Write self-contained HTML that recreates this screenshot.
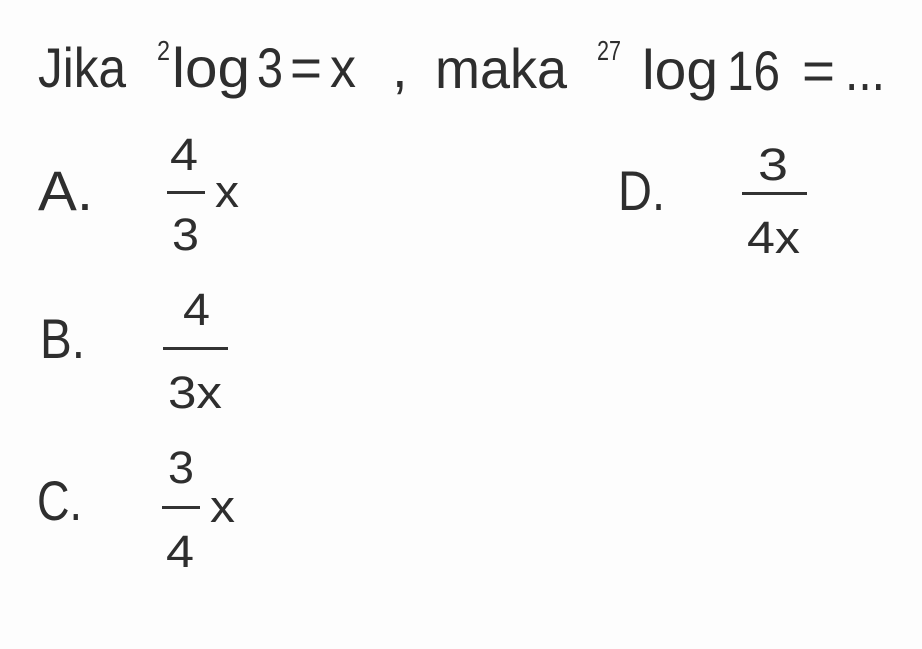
<!DOCTYPE html>
<html><head><meta charset="utf-8"><style>
html,body{margin:0;padding:0;background:#fdfdfd;}
svg{display:block}
text{font-family:"Liberation Sans",sans-serif;fill:#2e2e2e;}
</style></head><body>
<svg width="922" height="649" viewBox="0 0 922 649">
<rect width="922" height="649" fill="#fdfdfd"/>
<g font-size="56">
<text x="38" y="87" textLength="88" lengthAdjust="spacingAndGlyphs">Jika</text>
<text x="157" y="60" font-size="28" textLength="13" lengthAdjust="spacingAndGlyphs">2</text>
<text x="172" y="87" textLength="78" lengthAdjust="spacingAndGlyphs">log</text>
<text x="257" y="87" textLength="26" lengthAdjust="spacingAndGlyphs">3</text>
<text x="290" y="87" textLength="32" lengthAdjust="spacingAndGlyphs">=</text>
<text x="330" y="87" textLength="26" lengthAdjust="spacingAndGlyphs">x</text>
<text x="392" y="87">,</text>
<text x="435" y="88" textLength="132" lengthAdjust="spacingAndGlyphs">maka</text>
<text x="597" y="60" font-size="28" textLength="24" lengthAdjust="spacingAndGlyphs">27</text>
<text x="642" y="89" textLength="76" lengthAdjust="spacingAndGlyphs">log</text>
<text x="727" y="90" textLength="53" lengthAdjust="spacingAndGlyphs">16</text>
<text x="802" y="90" textLength="33" lengthAdjust="spacingAndGlyphs">=</text>
<text x="845" y="90" textLength="40" lengthAdjust="spacingAndGlyphs">...</text>

<text x="38" y="210" textLength="55" lengthAdjust="spacingAndGlyphs">A.</text>
<text x="618" y="210" textLength="47" lengthAdjust="spacingAndGlyphs">D.</text>
<text x="40" y="358" textLength="45" lengthAdjust="spacingAndGlyphs">B.</text>
<text x="37" y="520" textLength="45" lengthAdjust="spacingAndGlyphs">C.</text>
</g>
<g font-size="45">
<!-- A -->
<text x="170" y="170" textLength="28" lengthAdjust="spacingAndGlyphs">4</text>
<rect x="167" y="191" width="38" height="3" fill="#333"/>
<text x="172" y="250" textLength="27" lengthAdjust="spacingAndGlyphs">3</text>
<text x="215" y="207" textLength="24" lengthAdjust="spacingAndGlyphs">x</text>
<!-- D -->
<text x="758" y="180" textLength="30" lengthAdjust="spacingAndGlyphs">3</text>
<rect x="742" y="192" width="65" height="3" fill="#333"/>
<text x="747" y="253" textLength="53" lengthAdjust="spacingAndGlyphs">4x</text>
<!-- B -->
<text x="183" y="325" textLength="27" lengthAdjust="spacingAndGlyphs">4</text>
<rect x="163" y="347" width="65" height="3" fill="#333"/>
<text x="168" y="408" textLength="54" lengthAdjust="spacingAndGlyphs">3x</text>
<!-- C -->
<text x="168" y="483" textLength="26" lengthAdjust="spacingAndGlyphs">3</text>
<rect x="162" y="506" width="38" height="3" fill="#333"/>
<text x="210" y="522" textLength="25" lengthAdjust="spacingAndGlyphs">x</text>
<text x="166" y="567" textLength="28" lengthAdjust="spacingAndGlyphs">4</text>
</g>
</svg>
</body></html>
